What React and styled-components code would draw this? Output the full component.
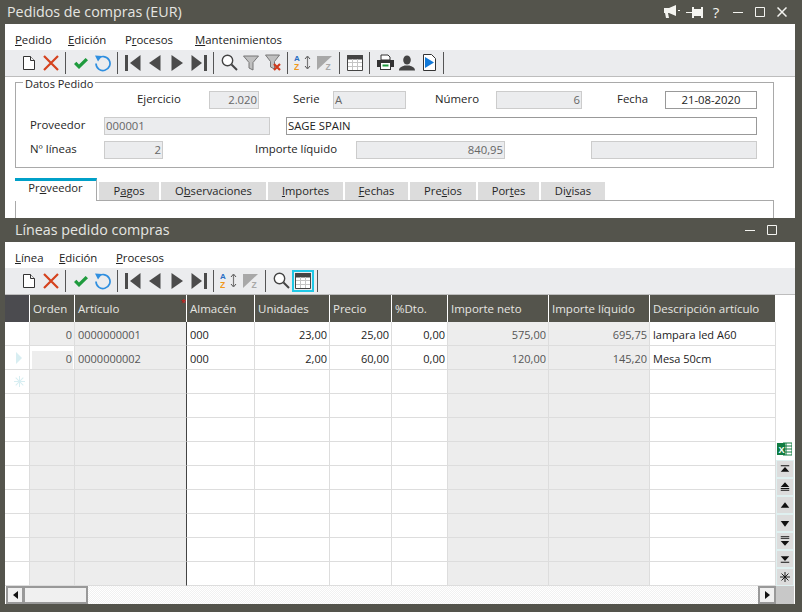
import React from 'react'
import styled, { createGlobalStyle } from 'styled-components'

const DARK = '#54544c'
const FONT = '"Open Sans", "Noto Sans", sans-serif'

const GlobalStyle = createGlobalStyle`
  html, body {
    margin: 0;
    padding: 0;
    background: ${DARK};
  }
  * {
    box-sizing: border-box;
  }
`

// toolbar icons
const Doc = () => (
  <svg width="16" height="16" viewBox="0 0 16 16">
    <path d="M2.5 1.5h7l4 4v9h-11z" fill="#fff" stroke="#333" />
    <path d="M9.5 1.5v4h4" fill="#eee" stroke="#333" />
  </svg>
)
const Cross = () => (
  <svg width="16" height="16" viewBox="0 0 16 16">
    <path d="M1 1l14 14M15 1L1 15" stroke="#d5431e" strokeWidth="2.2" fill="none" />
  </svg>
)
const Check = () => (
  <svg width="16" height="16" viewBox="0 0 16 16">
    <path d="M1 9l2.4-2.2 2.6 2.6L12.6 3 15 5.2 6 14z" fill="#1f9b3e" />
  </svg>
)
const Undo = () => (
  <svg width="18" height="18" viewBox="0 0 18 18">
    <path d="M4 4.6A7 7 0 1 1 2 9.5" fill="none" stroke="#2f8fe0" strokeWidth="1.7" />
    <path d="M1 1.5l7 .6-4 5.4z" fill="#2f8fe0" />
  </svg>
)
const First = () => (
  <svg width="16" height="16" viewBox="0 0 16 16">
    <path d="M0 0h3v16H0zM15.500 0v16L5 8z" fill="#4b4b4b" />
  </svg>
)
const Prev = () => (
  <svg width="12" height="16" viewBox="0 0 12 16">
    <path d="M11.500 0v16L0 8z" fill="#4b4b4b" />
  </svg>
)
const Next = () => (
  <svg width="12" height="16" viewBox="0 0 12 16">
    <path d="M.5 0v16L12 8z" fill="#4b4b4b" />
  </svg>
)
const Last = () => (
  <svg width="16" height="16" viewBox="0 0 16 16">
    <path d="M13 0h3v16h-3zM.5 0v16L11 8z" fill="#4b4b4b" />
  </svg>
)
const Search = () => (
  <svg width="17" height="17" viewBox="0 0 17 17">
    <circle cx="6.500" cy="6.500" r="5.200" fill="#fff" stroke="#444" strokeWidth="1.400" />
    <path d="M10.500 10.500l5.500 5.500" stroke="#444" strokeWidth="2" />
  </svg>
)
const Funnel = () => (
  <svg width="16" height="16" viewBox="0 0 16 16">
    <path d="M.5 1h15L10 7.500V15l-4-2V7.500z" fill="#c0c0c0" stroke="#777" />
  </svg>
)
const FunnelClear = () => (
  <svg width="16" height="17" viewBox="0 0 16 17">
    <path d="M.5 1h14L9.500 7.500V15l-4-2V7.500z" fill="#c0c0c0" stroke="#777" />
    <path d="M9 10l6 6M15 10l-6 6" stroke="#cf3a1c" strokeWidth="2.200" />
  </svg>
)
const Sort = () => (
  <svg width="18" height="17" viewBox="0 0 18 17">
    <text x="0" y="7" fontFamily="Liberation Sans" fontWeight="700" fontSize="8" fill="#2a6fc4">A</text>
    <text x="0" y="16" fontFamily="Liberation Sans" fontWeight="700" fontSize="8.500" fill="#f0981a">Z</text>
    <path d="M13.500 3v11" stroke="#777" strokeWidth="1.200" />
    <path d="M11 5l2.500-3L16 5M11 12l2.500 3L16 12" fill="none" stroke="#555" />
  </svg>
)
const SortOff = () => (
  <svg width="16" height="16" viewBox="0 0 16 16">
    <path d="M0 1h15L0 15z" fill="#a8a8a8" />
    <text x="8.500" y="15" fontFamily="Liberation Sans" fontWeight="700" fontSize="8.500" fill="#a8a8a8">Z</text>
  </svg>
)
const TableIcon = () => (
  <svg width="16" height="16" viewBox="0 0 16 16">
    <path d="M.5 .5h15v15H.5z" fill="#fff" stroke="#444" />
    <path d="M.5 .5h15v3.500H.5z" fill="#444" stroke="#444" />
    <path d="M1 7.500h14M1 11.500h14M5.500 4v11M10.500 4v11" stroke="#c4c4c4" />
  </svg>
)
const Printer = () => (
  <svg width="17" height="17" viewBox="0 0 17 17">
    <path d="M4 1h7l2 2v3H4z" fill="#fff" stroke="#333" />
    <path d="M0 6h17v7h-3v3H3v-3H0z" fill="#333" />
    <path d="M4 9h9v6H4z" fill="#fff" />
    <path d="M5.500 10.500h6v2h-6z" fill="#1f9b3e" />
  </svg>
)
const Person = () => (
  <svg width="16" height="16" viewBox="0 0 16 16">
    <ellipse cx="8" cy="5" rx="3.800" ry="4.600" fill="#444" />
    <path d="M0 15.500c0-3 3-4 5.500-5h5c2.500 1 5.500 2 5.500 5z" fill="#444" />
  </svg>
)
const DocPlay = () => (
  <svg width="13" height="17" viewBox="0 0 13 17">
    <path d="M.5 .5h8l4 4v12H.5z" fill="#fff" stroke="#333" />
    <path d="M2 3l9 5.500L2 14z" fill="#1179d8" />
  </svg>
)

// title bar glyphs
const Megaphone = () => (
  <svg width="17" height="14" viewBox="0 0 17 14">
    <path d="M0 3h5l7-3v11L5 8H4l1 5H2L1 8H0z" fill="#f4f4f0" />
    <path d="M14 5h2v1h-2z" fill="#f4f4f0" />
  </svg>
)
const Pin = () => (
  <svg width="17" height="11" viewBox="0 0 17 11">
    <path d="M0 5h6v1H0zM6 0h2v2h7V0h2v11h-2V9H8v2H6z" fill="#f4f4f0" />
  </svg>
)
const Minimize = () => (
  <svg width="10" height="10" viewBox="0 0 10 10">
    <path d="M0 5h10v1H0z" fill="#f4f4f0" />
  </svg>
)
const Maximize = () => (
  <svg width="10" height="10" viewBox="0 0 10 10">
    <path d="M.5 .5h9v9h-9z" fill="none" stroke="#f4f4f0" />
  </svg>
)
const Close = () => (
  <svg width="10" height="10" viewBox="0 0 10 10">
    <path d="M.5 .5l9 9M9.500 .5l-9 9" stroke="#f4f4f0" strokeWidth="1.500" />
  </svg>
)

// side strip glyphs
const sideGlyphs = [
  'M4 3h9v1H4zM8.500 5L13 10H4z',
  'M8.500 2L13 7H4zM4 8h9v1H4zM4 10h9v1H4z',
  'M8.500 4L13 10H4z',
  'M4 5h9L8.500 11z',
  'M4 2h9v1H4zM4 4h9v1H4zM4 7h9L8.500 12z',
  'M4 4h9L8.500 9zM4 10h9v1H4z',
]

const Asterisk = ({ color = '#111', size = 13 }) => (
  <svg width={size} height={size} viewBox="0 0 13 13">
    <path d="M6.500 0v13M0 6.500h13M2 2l9 9M11 2l-9 9" stroke={color} strokeWidth="1.200" />
  </svg>
)

const ExcelIcon = () => (
  <svg width="15" height="14" viewBox="0 0 15 14" style={{ display: 'block' }}>
    <path d="M6 1h9v12H6z" fill="#fff" stroke="#107c41" />
    <path d="M9 1v12M6 4h9M6 7h9M6 10h9" stroke="#107c41" />
    <path d="M0 1h8v12H0z" fill="#107c41" />
    <text x="1.500" y="10.500" fontFamily="Liberation Sans" fontWeight="700" fontSize="9" fill="#fff">X</text>
  </svg>
)

const Page = styled.div`
  width: 802px;
  height: 612px;
  overflow: hidden;
  background: ${DARK};
  font-family: ${FONT};
  font-size: 11px;
  color: #262626;
`

const TitleBar = styled.div`
  height: 24px;
  display: flex;
  align-items: center;
  padding-left: ${p => p.$indent}px;
  color: #e6e6e2;
  font-size: 14.3px;
`

const TitleText = styled.div`
  flex: 1;
  padding-bottom: 2px;
`

const Controls = styled.div`
  display: flex;
  align-items: center;
  color: #f4f4f0;
  margin-right: ${p => p.$right}px;
`

const Control = styled.div`
  width: 22px;
  display: flex;
  justify-content: center;
  font-size: 15px;
  line-height: 16px;
`

const Body = styled.div`
  margin: 0 7px 0 5px;
  background: #fff;
  height: ${p => p.$h}px;
  overflow: hidden;
`

const Menu = styled.div`
  height: 26px;
  display: flex;
  align-items: center;
  padding: 4px 0 0 10px;
  font-size: 11.4px;
  color: #222;
`

const MenuItem = styled.div`
  width: ${p => p.$w}px;
  flex: none;
`

const Toolbar = styled.div`
  height: 27px;
  display: flex;
  align-items: center;
  padding: 0 0 1px 13px;
  background: #ebecee;
  border-bottom: 1px solid #bdbdbd;
`

const ToolButton = styled.div`
  width: 22px;
  height: 22px;
  flex: none;
  display: flex;
  align-items: center;
  justify-content: center;
  ${p => p.$active && `
    box-shadow: inset 0 0 0 2px #1fc8e6;
  `}
`

const Sep = styled.div`
  width: 1px;
  height: 22px;
  flex: none;
  margin: 0 4px 0 3px;
  background: #555;
`

const Fieldset = styled.div`
  position: relative;
  margin: 5px 21px 0 10px;
  height: 86px;
  padding-top: 8px;
  border: 1px solid #a9a9a9;
`

const Legend = styled.div`
  position: absolute;
  top: -6px;
  left: 7px;
  padding: 0 2px;
  background: #fff;
  font-size: 11px;
  line-height: 14px;
`

const FormRow = styled.div`
  display: flex;
  align-items: center;
  height: 18px;
  margin-top: ${p => p.$top || 0}px;
`

const Caption = styled.div`
  width: ${p => p.$w}px;
  margin-left: ${p => p.$left}px;
  flex: none;
  font-size: 11.4px;
  padding-bottom: 3px;
`

const Field = styled.div`
  width: ${p => p.$w}px;
  margin-left: ${p => p.$left || 0}px;
  height: 18px;
  flex: none;
  padding: 0 1px;
  font-size: 11.3px;
  line-height: 16px;
  text-align: ${p => p.$align || 'left'};
  background: ${p => (p.$edit ? '#fff' : '#ebecee')};
  border: 1px solid ${p => (p.$edit ? '#999' : '#ccc')};
  color: ${p => (p.$edit ? '#222' : '#666')};
`

const Tabs = styled.div`
  display: flex;
  align-items: flex-end;
  gap: 2px;
  margin: 9px 0 0 10px;
  height: 23px;
  position: relative;
  z-index: 1;
`

const Tab = styled.div`
  width: ${p => p.$w}px;
  height: ${p => (p.$active ? 23 : 18)}px;
  flex: none;
  text-align: center;
  font-size: 11.2px;
  line-height: ${p => (p.$active ? 14 : 17)}px;
  background: ${p => (p.$active ? '#fff' : '#dcdcdc')};
  border-top: ${p => (p.$active ? '3px solid #00a0c8' : 'none')};
  border-right: ${p => (p.$active ? '1px solid #a9a9a9' : 'none')};
  margin-bottom: ${p => (p.$active ? -1 : 0)}px;
`

const TabPanel = styled.div`
  margin: 0 21px 0 10px;
  height: 30px;
  border: 1px solid #a9a9a9;
`

const GridArea = styled.div`
  display: flex;
  height: 309px;
`

const GridMain = styled.div`
  width: 771px;
  flex: none;
`

const HeaderRow = styled.div`
  display: flex;
  height: 27px;
  background: ${DARK};
`

const HeaderCell = styled.div`
  width: ${p => p.$w}px;
  flex: none;
  position: relative;
  padding-left: 3px;
  line-height: 28px;
  font-size: 11.5px;
  color: #e6e6e2;
  border-right: 1px solid #fff;
  background: ${p => (p.$corner ? '#4b4b4f' : 'transparent')};
`

const RedMark = styled.span`
  position: absolute;
  top: 3px;
  right: 0;
  font-size: 9px;
  line-height: 9px;
  color: #e01010;
`

const GridRow = styled.div`
  display: flex;
  height: 24px;
`

const Cell = styled.div`
  width: ${p => p.$w}px;
  flex: none;
  padding: 0 2px 0 3px;
  line-height: 25px;
  text-align: ${p => (p.$right ? 'right' : 'left')};
  color: ${p => (p.$gray ? '#555' : '#222')};
  background: ${p => (p.$gray ? '#ededed' : '#fff')};
  border-bottom: 1px solid #ddd;
  border-right: 1px solid ${p => (p.$divider ? '#444' : '#ddd')};
  ${p => p.$focus && `
    box-shadow: inset 2px 5px 0 #fff, inset -1px 0 0 #fff;
  `}
`

const RowMark = styled.div`
  width: 25px;
  flex: none;
  display: flex;
  align-items: center;
  justify-content: center;
  padding-left: 4px;
  background: #fff;
  border-bottom: 1px solid #ddd;
  border-right: 1px solid #ddd;
`

const Arrow = styled.div`
  width: 0;
  height: 0;
  border-left: 6px solid #d8eef2;
  border-top: 6px solid transparent;
  border-bottom: 6px solid transparent;
`

const HScroll = styled.div`
  height: 18px;
  margin-left: 1px;
  display: flex;
  justify-content: space-between;
  background-color: #fff;
  background-image: conic-gradient(#f1f1f1 25%, #fff 0 50%, #f1f1f1 0 75%, #fff 0);
  background-size: 2px 2px;
`

const ScrollLeft = styled.div`
  display: flex;
`

const ScrollBtn = styled.div`
  width: ${p => p.$w}px;
  height: 18px;
  display: flex;
  align-items: center;
  justify-content: center;
  background: #f0f0f0;
  border: 2px solid #999;
  ${p => p.$join && 'margin-left: -1px;'}
`

const Tri = styled.div`
  width: 0;
  height: 0;
  border-top: 4px solid transparent;
  border-bottom: 4px solid transparent;
  ${p => (p.$left ? 'border-right: 5px solid #111;' : 'border-left: 5px solid #111;')}
`

const Side = styled.div`
  width: 18px;
  flex: none;
  display: flex;
  flex-direction: column;
  justify-content: flex-end;
`

const ExcelBox = styled.div`
  height: 18px;
  padding: 0 0 0 1px;
`

const SideBtn = styled.div`
  height: 18px;
  display: flex;
  align-items: center;
  justify-content: center;
  background: #dcdcdc;
  border: 1px solid #dff0f0;
`

const SideFoot = styled.div`
  height: 18px;
  background: #c8c8c8;
`

const columns = [
  { name: 'Orden', w: 45, gray: true, right: true },
  { name: 'Artículo', w: 112, gray: true, divider: true },
  { name: 'Almacén', w: 68 },
  { name: 'Unidades', w: 75, right: true },
  { name: 'Precio', w: 62, right: true },
  { name: '%Dto.', w: 56, right: true },
  { name: 'Importe neto', w: 101, gray: true, right: true },
  { name: 'Importe líquido', w: 101, gray: true, right: true },
  { name: 'Descripción artículo', w: 126 },
]

const rows = [
  ['0', '0000000001', '000', '23,00', '25,00', '0,00', '575,00', '695,75', 'lampara led A60'],
  ['0', '0000000002', '000', '2,00', '60,00', '0,00', '120,00', '145,20', 'Mesa 50cm'],
]

const tabs = [
  { w: 82, label: <>Pr<u>o</u>veedor</>, active: true },
  { w: 60, label: <>P<u>a</u>gos</> },
  { w: 105, label: <>O<u>b</u>servaciones</> },
  { w: 75, label: <><u>I</u>mportes</> },
  { w: 63, label: <><u>F</u>echas</> },
  { w: 66, label: <>Pre<u>c</u>ios</> },
  { w: 61, label: <>Por<u>t</u>es</> },
  { w: 64, label: <>Di<u>v</u>isas</> },
]

const Tools = ({ items }) => items.map((item, i) => (
  item === '|' ? <Sep key={i} /> : <ToolButton key={i} $active={item.active}>{item.icon || item}</ToolButton>
))

const baseTools = [<Doc />, <Cross />, '|', <Check />, <Undo />, '|', <First />, <Prev />, <Next />, <Last />, '|']

const App = () => {
  return (
    <Page>
      <GlobalStyle />
      <TitleBar $indent={7}>
        <TitleText>Pedidos de compras (EUR)</TitleText>
        <Controls $right={9}>
          <Control><Megaphone /></Control>
          <Control><Pin /></Control>
          <Control>?</Control>
          <Control><Minimize /></Control>
          <Control><Maximize /></Control>
          <Control><Close /></Control>
        </Controls>
      </TitleBar>
      <Body $h={194}>
        <Menu>
          <MenuItem $w={53}><u>P</u>edido</MenuItem>
          <MenuItem $w={57}><u>E</u>dición</MenuItem>
          <MenuItem $w={70}>P<u>r</u>ocesos</MenuItem>
          <MenuItem $w={100}><u>M</u>antenimientos</MenuItem>
        </Menu>
        <Toolbar>
          <Tools items={[...baseTools, <Search />, <Funnel />, <FunnelClear />, '|', <Sort />, <SortOff />, '|', <TableIcon />, '|', <Printer />, <Person />, <DocPlay />, '|']} />
        </Toolbar>
        <Fieldset>
          <Legend>Datos Pedido</Legend>
          <FormRow>
            <Caption $left={121} $w={72}>Ejercicio</Caption>
            <Field $w={50} $align="right">2.020</Field>
            <Caption $left={34} $w={40}>Serie</Caption>
            <Field $w={73}>A</Field>
            <Caption $left={29} $w={61}>Número</Caption>
            <Field $w={86} $align="right">6</Field>
            <Caption $left={35} $w={48}>Fecha</Caption>
            <Field $w={92} $edit $align="center">21-08-2020</Field>
          </FormRow>
          <FormRow $top={8}>
            <Caption $left={14} $w={74}>Proveedor</Caption>
            <Field $w={166}>000001</Field>
            <Field $w={471} $left={16} $edit>SAGE SPAIN</Field>
          </FormRow>
          <FormRow $top={6}>
            <Caption $left={14} $w={74}>Nº líneas</Caption>
            <Field $w={59} $align="right">2</Field>
            <Caption $left={92} $w={101}>Importe líquido</Caption>
            <Field $w={149} $align="right">840,95</Field>
            <Field $w={166} $left={86} />
          </FormRow>
        </Fieldset>
        <Tabs>
          {tabs.map((tab, i) => (
            <Tab key={i} $w={tab.w} $active={tab.active}>{tab.label}</Tab>
          ))}
        </Tabs>
        <TabPanel />
      </Body>
      <TitleBar $indent={15}>
        <TitleText>Líneas pedido compras</TitleText>
        <Controls $right={19}>
          <Control><Minimize /></Control>
          <Control><Maximize /></Control>
        </Controls>
      </TitleBar>
      <Body $h={362}>
        <Menu>
          <MenuItem $w={44}><u>L</u>ínea</MenuItem>
          <MenuItem $w={57}><u>E</u>dición</MenuItem>
          <MenuItem $w={70}><u>P</u>rocesos</MenuItem>
        </Menu>
        <Toolbar>
          <Tools items={[...baseTools, <Sort />, <SortOff />, '|', <Search />, { icon: <TableIcon />, active: true }, '|']} />
        </Toolbar>
        <GridArea>
          <GridMain>
            <HeaderRow>
              <HeaderCell $w={25} $corner />
              {columns.map(col => (
                <HeaderCell key={col.name} $w={col.w}>
                  {col.name}
                  {col.divider && <RedMark>*</RedMark>}
                </HeaderCell>
              ))}
            </HeaderRow>
            {Array.from({ length: 11 }).map((_, r) => (
              <GridRow key={r}>
                <RowMark>
                  {r === 1 && <Arrow />}
                  {r === 2 && <Asterisk color="#d8eef2" size={11} />}
                </RowMark>
                {columns.map((col, c) => (
                  <Cell
                    key={col.name}
                    $w={col.w}
                    $gray={col.gray}
                    $right={col.right}
                    $divider={col.divider}
                    $focus={r === 1 && c === 0}
                  >
                    {rows[r] ? rows[r][c] : ''}
                  </Cell>
                ))}
              </GridRow>
            ))}
            <HScroll>
              <ScrollLeft>
                <ScrollBtn $w={18}><Tri $left /></ScrollBtn>
                <ScrollBtn $w={65} $join />
              </ScrollLeft>
              <ScrollBtn $w={18}><Tri /></ScrollBtn>
            </HScroll>
          </GridMain>
          <Side>
            <ExcelBox><ExcelIcon /></ExcelBox>
            {sideGlyphs.map(d => (
              <SideBtn key={d}>
                <svg width="16" height="14" viewBox="0 0 17 14"><path d={d} fill="#111" /></svg>
              </SideBtn>
            ))}
            <SideBtn><Asterisk size={10} /></SideBtn>
            <SideFoot />
          </Side>
        </GridArea>
      </Body>
    </Page>
  )
}

export default App
